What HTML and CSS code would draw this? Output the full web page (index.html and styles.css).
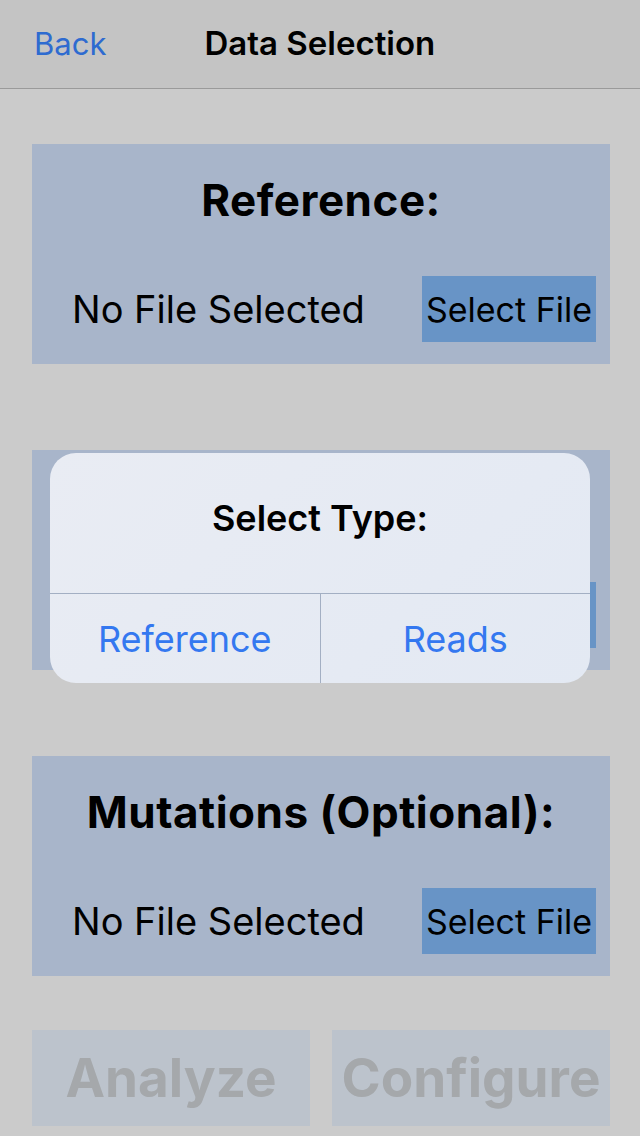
FILE: index.html
```html
<!DOCTYPE html>
<html>
<head>
<meta charset="utf-8">
<link rel="stylesheet" href="styles.css">
</head>
<body>
<div class="screen">
  <header class="nav">
    <span class="nav-back">Back</span>
    <span class="nav-title">Data Selection</span>
  </header>
  <main class="content">
    <section class="card">
      <h2 class="card-title">Reference:</h2>
      <div class="card-row">
        <span class="file-label">No File Selected</span>
        <span class="file-btn">Select File</span>
      </div>
    </section>
    <section class="card">
      <div class="card-row">
        <span class="file-label"></span>
        <span class="file-btn"></span>
      </div>
    </section>
    <section class="card">
      <h2 class="card-title">Mutations (Optional):</h2>
      <div class="card-row">
        <span class="file-label">No File Selected</span>
        <span class="file-btn">Select File</span>
      </div>
    </section>
    <div class="actions">
      <span class="action-btn">Analyze</span>
      <span class="action-btn">Configure</span>
    </div>
  </main>
  <div class="alert">
    <div class="alert-title">Select Type:</div>
    <div class="alert-buttons">
      <span class="alert-btn">Reference</span>
      <span class="alert-btn">Reads</span>
    </div>
  </div>
</div>
</body>
</html>
```
FILE: styles.css
```css
html, body {
  margin: 0;
  padding: 0;
}
body {
  font-family: Inter, Roboto, "Liberation Sans", sans-serif;
  background: #cbcbcb;
}
.screen {
  position: relative;
  width: 640px;
  height: 1136px;
  overflow: hidden;
  background: #cbcbcb;
}
.nav {
  height: 88px;
  background: #c4c4c4;
  border-bottom: 1px solid #9a9a9a;
  display: flex;
  align-items: center;
  position: relative;
}
.nav-back {
  margin-left: 34px;
  font-size: 31px;
  color: #2e6bd0;
  padding-bottom: 2px;
}
.nav-title {
  margin-left: 98px;
  font-size: 33px;
  font-weight: 600;
  color: #000;
  padding-bottom: 2px;
}
.content {
  padding: 55px 30px 0 32px;
  display: flex;
  flex-direction: column;
  gap: 86px;
}
.card {
  height: 220px;
  background: #a8b5ca;
  display: flex;
  flex-direction: column;
  box-sizing: border-box;
}
.card-title {
  margin: 33px 0 0;
  text-align: center;
  font-size: 44px;
  letter-spacing: 0.5px;
  font-weight: 700;
  line-height: 46px;
  color: #000;
}
.card-row {
  margin-top: auto;
  margin-bottom: 22px;
  display: flex;
  align-items: center;
  padding: 0 14px 0 40px;
}
.file-label {
  font-size: 38px;
  color: #000;
  flex: 1;
}
.file-btn {
  height: 66px;
  width: 174px;
  background: #6894c6;
  display: flex;
  align-items: center;
  justify-content: center;
  font-size: 34px;
  color: #000;
  white-space: nowrap;
}
.actions {
  display: flex;
  gap: 22px;
  margin-top: -32px;
}
.action-btn {
  flex: 1;
  height: 96px;
  background: #bcc3cc;
  display: flex;
  align-items: center;
  justify-content: center;
  font-size: 53px;
  font-weight: 700;
  color: #a5a8ab;
}
.alert {
  position: absolute;
  left: 50px;
  top: 453px;
  width: 540px;
  height: 230px;
  border-radius: 26px;
  background: linear-gradient(135deg, #e9ecf3, #e3e9f3);
  display: flex;
  flex-direction: column;
  overflow: hidden;
}
.alert-title {
  height: 141px;
  box-sizing: border-box;
  padding-top: 43px;
  text-align: center;
  font-size: 36px;
  font-weight: 600;
  color: #000;
  border-bottom: 1px solid #a3afc3;
}
.alert-buttons {
  flex: 1;
  display: flex;
}
.alert-btn {
  flex: 1;
  display: flex;
  align-items: center;
  justify-content: center;
  font-size: 36px;
  color: #3478f0;
}
.alert-btn + .alert-btn {
  border-left: 1px solid #a3afc3;
}
```
